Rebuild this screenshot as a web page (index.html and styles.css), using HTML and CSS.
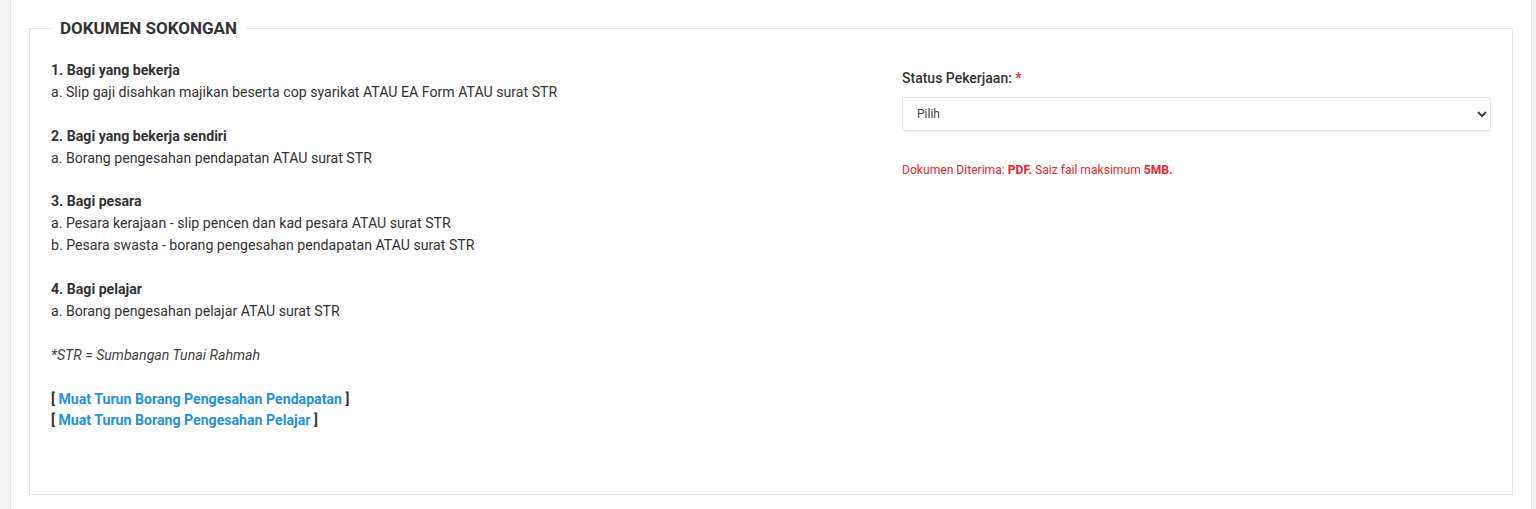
FILE: index.html
```html
<!DOCTYPE html>
<html>
<head>
<meta charset="utf-8">
<title>Dokumen Sokongan</title>
<link rel="stylesheet" href="styles.css">
</head>
<body>
<div class="card">
  <fieldset class="box">
    <legend class="box-title">DOKUMEN SOKONGAN</legend>
    <div class="grid">
      <div class="info">
        <p><b>1. Bagi yang bekerja</b><br>a. Slip gaji disahkan majikan beserta cop syarikat ATAU EA Form ATAU surat STR</p>
        <p><b>2. Bagi yang bekerja sendiri</b><br>a. Borang pengesahan pendapatan ATAU surat STR</p>
        <p><b>3. Bagi pesara</b><br>a. Pesara kerajaan - slip pencen dan kad pesara ATAU surat STR<br>b. Pesara swasta - borang pengesahan pendapatan ATAU surat STR</p>
        <p><b>4. Bagi pelajar</b><br>a. Borang pengesahan pelajar ATAU surat STR</p>
        <p><i>*STR = Sumbangan Tunai Rahmah</i></p>
        <p class="links"><b>[ <a href="#">Muat Turun Borang Pengesahan Pendapatan</a> ]</b><br><b>[ <a href="#">Muat Turun Borang Pengesahan Pelajar</a> ]</b></p>
      </div>
      <div class="form">
        <label class="label" for="status">Status Pekerjaan: <span class="req">*</span></label>
        <select id="status" class="select"><option>Pilih</option></select>
        <p class="note">Dokumen Diterima: <b>PDF.</b> Saiz fail maksimum <b>5MB.</b></p>
      </div>
    </div>
  </fieldset>
</div>
</body>
</html>
```
FILE: styles.css
```css
html, body {
  margin: 0;
  padding: 0;
}
body {
  background: #f3f3f3;
  font-family: Roboto, "Liberation Sans", Arial, sans-serif;
  color: #333;
  height: 509px;
  overflow: hidden;
}
.card {
  box-sizing: border-box;
  margin: 0 4px 0 10px;
  background: #fff;
  border-left: 1px solid #e6e6e6;
  border-right: 1px solid #e6e6e6;
  padding: 17px 18px 0 18px;
  height: 509px;
}
.box {
  margin: 0;
  border: 1px solid #e4e4e4;
  padding: 0 20px 62px 21px;
  min-width: 0;
}
.box-title {
  padding: 0 9px;
  font-size: 17px;
  font-weight: 700;
  line-height: 22px;
  color: #333;
}
.grid {
  display: grid;
  grid-template-columns: 851px 589px;
  margin-top: 21px;
}
.info {
  font-size: 14.15px;
  line-height: 21.9px;
}
.info p {
  margin: 0 0 21.9px 0;
}
.info b {
  font-weight: 700;
}
.info i {
  color: #444;
}
.info .links {
  margin: 0;
}
.links a {
  color: #2290e6;
  text-decoration: none;
}
.form {
  padding-top: 8px;
}
.label {
  display: block;
  font-size: 14px;
  font-weight: 500;
  line-height: 20px;
  color: #333;
  margin-bottom: 9px;
}
.req {
  color: #e8262c;
}
.select {
  display: block;
  width: 100%;
  height: 34px;
  border: 1px solid #e2e2e2;
  border-radius: 3px;
  background: #fff;
  font-family: Roboto, "Liberation Sans", Arial, sans-serif;
  font-size: 12px;
  color: #444;
  padding: 0 9px 0 10px;
  box-shadow: 0 1px 1px rgba(0,0,0,0.03);
}
.note {
  margin: 32px 0 0 0;
  font-size: 12.1px;
  line-height: 14px;
  color: #e8262c;
}
.note b {
  font-weight: 700;
}
```
